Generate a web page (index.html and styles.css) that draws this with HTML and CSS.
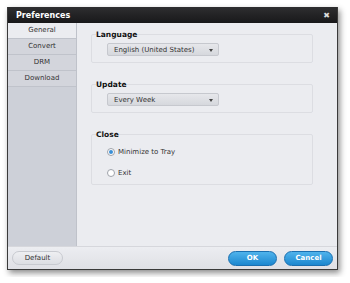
FILE: index.html
```html
<!DOCTYPE html>
<html lang="en">

<head>
    <meta charset="UTF-8">
    <link rel="stylesheet" href="styles.css">
</head>

<body>
    <div class="window">
        <div class="title-bar">
            <span class="title">Preferences</span>
            <span class="close-btn">&#x2716;</span>
        </div>

        <div class="main">
            <div class="sidebar">
                <div class="tab active">General</div>
                <div class="tab">Convert</div>
                <div class="tab">DRM</div>
                <div class="tab">Download</div>
            </div>

            <div class="content">
                <fieldset class="group">
                    <legend>Language</legend>
                    <div class="select">English (United States)<span class="arrow"></span></div>
                </fieldset>

                <fieldset class="group">
                    <legend>Update</legend>
                    <div class="select">Every Week<span class="arrow"></span></div>
                </fieldset>

                <fieldset class="group close-group">
                    <legend>Close</legend>
                    <div class="radio-row"><span class="radio checked"></span>Minimize to Tray</div>
                    <div class="radio-row"><span class="radio"></span>Exit</div>
                </fieldset>
            </div>
        </div>

        <div class="footer">
            <button class="default-button">Default</button>
            <div class="footer-right">
                <button class="blue-button">OK</button>
                <button class="blue-button">Cancel</button>
            </div>
        </div>
    </div>
</body>

</html>
```

FILE: styles.css
```css
body {
    margin: 0;
    padding: 7px;
    background-color: #fff;
    font-family: "DejaVu Sans", "Liberation Sans", sans-serif;
    font-size: 7px;
    color: #222;
}

.window {
    width: 331px;
    height: 263px;
    display: flex;
    flex-direction: column;
    border: 1px solid #3a3a3a;
    border-top: none;
    box-sizing: border-box;
    box-shadow: 2px 3px 6px rgba(0, 0, 0, 0.45);
    background-color: #ebecf0;
}

.title-bar {
    height: 16px;
    background: linear-gradient(#2e2e30, #18181a);
    display: flex;
    align-items: center;
    justify-content: space-between;
    padding: 0 7px 0 8px;
    color: #fff;
}

.title {
    font-weight: bold;
    font-size: 8px;
}

.close-btn {
    font-size: 8px;
    color: #ddd;
}

.main {
    flex: 1;
    display: flex;
}

.sidebar {
    width: 68px;
    background-color: #cdd0d8;
    border-right: 1px solid #bfc2ca;
}

.tab {
    height: 15px;
    line-height: 15px;
    text-align: center;
    background-color: #d3d5dc;
    border-bottom: 1px solid #c0c3cb;
    color: #333;
}

.tab.active {
    background-color: #ebecf0;
}

.content {
    flex: 1;
    padding: 7px 24px 0 14px;
}

.group {
    margin: 0 0 17px 0;
    padding: 4px 15px 6px 15px;
    border: 1px solid #dcdde2;
    border-radius: 2px;
    height: 33px;
    box-sizing: border-box;
}

.group legend {
    padding: 0;
    margin-left: -11px;
    font-weight: bold;
    font-size: 7.5px;
    color: #111;
}

.select {
    width: 112px;
    height: 13px;
    line-height: 13px;
    box-sizing: border-box;
    padding: 0 6px;
    border: 1px solid #c6c8ce;
    border-radius: 2px;
    background: linear-gradient(#e6e7eb, #d6d8dd);
    position: relative;
    color: #333;
}

.arrow {
    position: absolute;
    right: 5px;
    top: 5px;
    border-left: 2.5px solid transparent;
    border-right: 2.5px solid transparent;
    border-top: 3px solid #444;
}

.close-group {
    height: 55px;
    padding-top: 8px;
}

.radio-row {
    display: flex;
    align-items: center;
    height: 10px;
    margin-bottom: 11px;
    color: #333;
}

.radio {
    width: 6px;
    height: 6px;
    border: 1px solid #9ea2aa;
    border-radius: 50%;
    background: #fff;
    margin-right: 3px;
    position: relative;
}

.radio.checked::after {
    content: "";
    position: absolute;
    left: 1px;
    top: 1px;
    width: 4px;
    height: 4px;
    border-radius: 50%;
    background: #3a8fd6;
}

.footer {
    height: 23px;
    border-top: 1px solid #d6d7dc;
    background: linear-gradient(#ecedf1, #dfe0e5);
    display: flex;
    align-items: center;
    justify-content: space-between;
    padding: 0 4px 0 4px;
    box-sizing: border-box;
}

.footer-right {
    display: flex;
    gap: 7px;
}

.default-button {
    width: 51px;
    height: 14px;
    border: 1px solid #c8cad0;
    border-radius: 7px;
    background: linear-gradient(#eeeff2, #dcdee3);
    font-family: inherit;
    font-size: 7px;
    color: #333;
    padding: 0;
}

.blue-button {
    width: 49px;
    height: 15px;
    border: 1px solid #1a6fb0;
    border-radius: 8px;
    background: linear-gradient(#4fb3ec, #1c87cf);
    font-family: inherit;
    font-size: 7px;
    font-weight: bold;
    color: #fff;
    padding: 0;
}
```
